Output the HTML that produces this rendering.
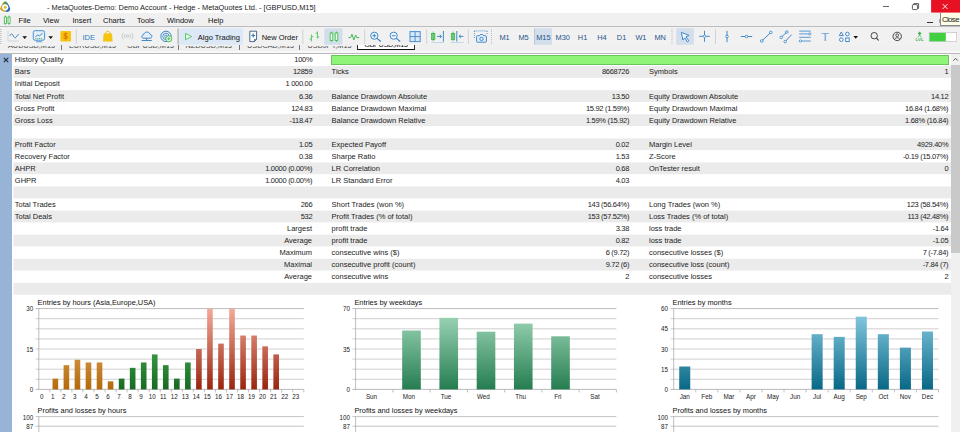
<!DOCTYPE html>
<html><head><meta charset="utf-8"><title>MetaTrader 5 - Strategy Tester Report</title>
<style>
html,body{margin:0;padding:0}
body{width:960px;height:432px;overflow:hidden;position:relative;background:#fff;font-family:"Liberation Sans",sans-serif;font-size:7.5px;color:#1c1c1c}
div,span{position:absolute;white-space:pre;line-height:12px}
svg{position:absolute;overflow:visible}
.row{left:12px;width:939px;height:12px}
.g{background:#ebebeb}
.l{height:12px}
.r{height:12px;text-align:right}
.n{letter-spacing:-0.3px;margin-right:-0.3px}
.mi{top:15.1px;height:12px;font-size:7.5px;color:#111}
.tf{top:31.8px;height:12px;color:#28558a;font-size:7.4px}
.tab{top:0;height:12px;color:#4a4a4a;font-size:7.3px}
.ct{font-size:7.4px;color:#111;height:10px;line-height:10px}
</style></head><body>

<div style="left:0;top:0;width:960px;height:13.3px;background:#fff"></div>
<div style="left:47px;top:1.8px;height:12px;color:#222;font-size:7.45px">- MetaQuotes-Demo: Demo Account - Hedge - MetaQuotes Ltd. - [GBPUSD,M15]</div>
<svg style="left:0;top:1px" width="11" height="12" viewBox="0 0 11 12">
<path d="M5.2 0.6 C7.2 0.8 9.6 5 10.2 8 C10.4 10 8.6 11 5.8 10.9 Z" fill="#2f6fb3"/>
<path d="M5.2 0.6 C3.4 1 0.8 5.4 0.2 7.6 C0 9.6 2 10.8 5.8 10.9 Z" fill="#c9a227"/>
<path d="M5.2 0.4 C6.6 0.6 7.6 2 8 3 L2.6 3 C3.2 1.6 4.2 0.6 5.2 0.4Z" fill="#5aa04a"/>
<circle cx="5.2" cy="6.3" r="3.1" fill="#fff"/>
<circle cx="5.2" cy="6.3" r="1.5" fill="#e3b93a"/>
</svg>
<svg style="left:931px;top:0" width="29" height="13"><rect x="0.1" y="0" width="29" height="12.6" fill="#e81123"/></svg>
<svg style="left:931px;top:0" width="29" height="13"><path d="M11.6 4 L16.6 9 M16.6 4 L11.6 9" stroke="#fff" stroke-width="0.9" fill="none"/></svg>
<svg style="left:905px;top:0" width="20" height="13"><rect x="7.4" y="4.6" width="5" height="5" rx="0.8" fill="none" stroke="#333" stroke-width="0.8"/><path d="M8.8 4.4 V3.6 H13.6 V8.4 H12.6" fill="none" stroke="#333" stroke-width="0.8"/></svg>
<div style="left:883px;top:6.1px;width:6.2px;height:0.6px;background:#666"></div>
<div style="left:0;top:13.3px;width:960px;height:40px;background:#f0f0f0"></div>
<div style="left:0;top:26px;width:960px;height:0.8px;background:#bdbdbd"></div>
<svg style="left:0;top:13px" width="14" height="14" viewBox="0 13 14 14">
<rect x="4.3" y="17" width="2.1" height="6.4" fill="#eefaee" stroke="#3fb44c" stroke-width="0.8"/>
<rect x="8" y="17" width="2.1" height="6.4" fill="#eefaee" stroke="#3fb44c" stroke-width="0.8"/>
<path d="M5.35 15.7 V17 M5.35 23.4 V24.9 M9.05 15.7 V17 M9.05 23.4 V24.9" stroke="#3fb44c" stroke-width="0.8"/>
</svg>
<div class="mi" style="left:18.6px">File</div>
<div class="mi" style="left:43px">View</div>
<div class="mi" style="left:72.5px">Insert</div>
<div class="mi" style="left:103px">Charts</div>
<div class="mi" style="left:137px">Tools</div>
<div class="mi" style="left:167px">Window</div>
<div class="mi" style="left:208px">Help</div>
<div style="left:927.2px;top:22px;width:5.4px;height:1px;background:#333"></div>
<div style="left:939px;top:18.5px;width:1.2px;height:4px;background:#aaa"></div>
<div style="left:940.3px;top:13.4px;width:22px;height:11.2px;background:#fdfde6;border-left:0.7px solid #8a8a8a;border-bottom:0.7px solid #8a8a8a"></div>
<div style="left:941.9px;top:14px;height:12px;font-size:7.9px;letter-spacing:-0.62px;color:#222">Close</div>
<div style="left:0;top:45.5px;width:960px;height:3.1px;overflow:hidden">
<div class="tab" style="left:8px;top:-5.9px">AUDUSD,M15</div>
<div class="tab" style="left:69px;top:-5.9px">EURUSD,M15</div>
<div class="tab" style="left:127px;top:-5.9px">GBPUSD,M15</div>
<div class="tab" style="left:185.5px;top:-5.9px">NZDUSD,M15</div>
<div class="tab" style="left:247px;top:-5.9px">USDCAD,M15</div>
<div class="tab" style="left:307.5px;top:-5.9px">USDJPY,M15</div>
</div>
<div style="left:61.2px;top:45px;width:0.7px;height:4.6px;background:#777"></div>
<div style="left:178.4px;top:45px;width:0.7px;height:4.6px;background:#777"></div>
<div style="left:239.4px;top:45px;width:0.7px;height:4.6px;background:#777"></div>
<div style="left:299.4px;top:45px;width:0.7px;height:4.6px;background:#777"></div>
<div style="left:356.8px;top:40px;width:58.2px;height:10.4px;background:#fff;border:0.7px solid #333;border-bottom:1.1px solid #111;box-sizing:border-box"></div>
<div style="left:358px;top:45.4px;width:56px;height:2.9px;overflow:hidden"><div class="tab" style="left:6.2px;top:-6.3px;color:#111;font-size:7.3px;letter-spacing:-0.35px">GBPUSD,M15</div></div>
<div style="left:0;top:51px;width:960px;height:1.8px;background:#f8f8f8"></div>
<div style="left:0;top:52.8px;width:960px;height:1px;background:#b9b9b9"></div>
<div style="left:0;top:26.8px;width:960px;height:18.6px;background:#f1f1f1"></div>
<svg style="left:0;top:0" width="960" height="54" viewBox="0 0 960 54" fill="none">
<path d="M0.9 29 V44" stroke="#a8a8a8" stroke-width="1" stroke-dasharray="1 1"/>
<path d="M76.3 29.4 V44" stroke="#c9c9c9" stroke-width="0.8"/>
<path d="M302.8 29.4 V44" stroke="#c9c9c9" stroke-width="0.8"/>
<path d="M364.7 29.4 V44" stroke="#c9c9c9" stroke-width="0.8"/>
<path d="M426.7 29.4 V44" stroke="#c9c9c9" stroke-width="0.8"/>
<path d="M468.4 29.4 V44" stroke="#c9c9c9" stroke-width="0.8"/>
<path d="M715.5 29.4 V44" stroke="#c9c9c9" stroke-width="0.8"/>
<path d="M178.1 28.5 V44.6" stroke="#8a8a8a" stroke-width="0.8"/>
<path d="M491.5 29 V44.5" stroke="#bcbcbc" stroke-width="1" stroke-dasharray="1 1"/>
<path d="M672 29 V44.5" stroke="#bcbcbc" stroke-width="1" stroke-dasharray="1 1"/>
<rect x="179.4" y="28.4" width="63.6" height="16.3" fill="#dce8f5"/>
<rect x="324.3" y="28.3" width="18.1" height="16.4" fill="#d2deec"/>
<rect x="534.3" y="28.3" width="17.7" height="16.4" fill="#d2deec"/>
<path d="M534.5 28.3 V44.7" stroke="#9fb6d0" stroke-width="0.6"/>
<rect x="676.2" y="28.3" width="17.6" height="16.4" fill="#d2deec"/>
<path d="M8 31 V41 H18.8" stroke="#cdd5de" stroke-width="1"/>
<path d="M9.8 35.8 C10.8 33.8 12 33.4 13 35.2 C14 37.4 15.2 38.8 16.4 36.8 C17.2 35.4 17.8 34.8 18.8 34.7" stroke="#2f7ec2" stroke-width="1"/>
<path d="M22.4 36.2 H27.0 L24.7 38.9 Z" fill="#111"/>
<rect x="33.3" y="30.7" width="11.3" height="9.5" rx="1.6" fill="#e6f0fa" stroke="#4a8fd2" stroke-width="1"/>
<path d="M36 41.6 H42" stroke="#7fb0e0" stroke-width="1.4"/>
<path d="M35.4 36.8 L37.6 35 L39.4 35.9 L42.6 33.2" stroke="#2f7ec2" stroke-width="0.9"/>
<path d="M35.4 38.5 H42.8" stroke="#3fb44c" stroke-width="0.9" stroke-dasharray="1 0.8"/>
<path d="M48.400000000000006 36.2 H53.0 L50.7 38.9 Z" fill="#111"/>
<rect x="60.4" y="31" width="10.6" height="10.6" rx="0.8" fill="#f6c30f"/>
<text x="65.7" y="39.3" font-size="8.4" font-weight="bold" text-anchor="middle" fill="#e07b00" font-family="Liberation Sans,sans-serif">$</text>
<path d="M65.7 32.4 V40.4" stroke="#e07b00" stroke-width="0.7"/>
<path d="M103.6 33.6 H112 L112.6 41.6 H103 Z" fill="#f6c30f"/>
<path d="M105.8 34 V33 C105.8 30.6 109.8 30.6 109.8 33 V34" stroke="#eab308" stroke-width="0.9"/>
<circle cx="127.5" cy="36.2" r="1.1" stroke="#bdbdbd" stroke-width="0.8"/>
<path d="M125.4 34 C124.2 35.4 124.2 37 125.4 38.4 M129.6 34 C130.8 35.4 130.8 37 129.6 38.4 M123.4 33 C121.6 35 121.6 37.6 123.4 39.4 M131.6 33 C133.4 35 133.4 37.6 131.6 39.4" stroke="#c4c4c4" stroke-width="0.9"/>
<path d="M143.8 38.2 C141 38.2 141 35 143.6 34.8 C144 31.4 149.4 31 150 34.4 C152.6 34.6 152.6 38.2 150 38.2 Z" fill="#e6f0fa" stroke="#2f7ec2" stroke-width="0.9"/>
<path d="M146.6 38.2 V40.4 M141.6 40.5 H151.8" stroke="#2f7ec2" stroke-width="0.9"/>
<circle cx="166" cy="36.4" r="5.2" fill="#e6f0fa" stroke="#2f7ec2" stroke-width="0.9"/><circle cx="166" cy="36.4" r="3.2" stroke="#2f7ec2" stroke-width="0.8"/><circle cx="166" cy="36.4" r="1.3" stroke="#2f7ec2" stroke-width="0.7"/>
<circle cx="168.8" cy="38.8" r="3" fill="#f4fcf4" stroke="#3fb44c" stroke-width="0.9"/><path d="M168.8 37.2 V40.4 M167.2 38.8 H170.4" stroke="#3fb44c" stroke-width="0.9"/>
<path d="M185.5 33.4 L191.6 36.55 L185.5 39.7 Z" fill="#effaf0" stroke="#4cc458" stroke-width="0.9" stroke-linejoin="round"/>
<path d="M249.8 31.2 H256.6 V39.4 L254.4 41.6 H249.8 Z" fill="#fff" stroke="#3b5a7a" stroke-width="0.9" stroke-linejoin="round"/>
<path d="M256.6 39.4 H254.4 V41.6" stroke="#3b5a7a" stroke-width="0.8"/>
<path d="M253.2 33.6 V37.4 M251.3 35.5 H255.1" stroke="#2f7ec2" stroke-width="1.1"/>
<path d="M311.4 34.6 V41.4 M309.6 39 H311.4 M311.4 36.6 H313.2 M317.4 31.4 V38.6 M315.6 33.2 H317.4 M317.4 37 H319.2" stroke="#4cc458" stroke-width="0.9"/>
<rect x="330.2" y="33" width="2.6" height="7.4" fill="#f0fbf0" stroke="#3cc24a" stroke-width="0.9"/><rect x="335.2" y="33" width="2.6" height="7.4" fill="#f0fbf0" stroke="#3cc24a" stroke-width="0.9"/>
<path d="M331.5 31.6 V33 M331.5 40.4 V41.8 M336.5 31.6 V33 M336.5 40.4 V41.8" stroke="#3cc24a" stroke-width="0.9"/>
<path d="M348.4 37.6 H350.6 L352 34.2 L353.8 40 L355.6 35 L356.8 37.6 H359.2" stroke="#3fb44c" stroke-width="0.95" stroke-linejoin="round"/>
<circle cx="374.3" cy="35.7" r="3.6" fill="#eef5fc" stroke="#2f7ec2" stroke-width="0.9"/><path d="M377.0 38.4 L380.8 41.5" stroke="#2f7ec2" stroke-width="1.1"/>
<path d="M372.5 35.7 H376.1 M374.3 33.9 V37.5" stroke="#2f7ec2" stroke-width="0.9"/>
<circle cx="393.7" cy="35.7" r="3.6" fill="#eef5fc" stroke="#2f7ec2" stroke-width="0.9"/><path d="M396.4 38.4 L400.2 41.5" stroke="#2f7ec2" stroke-width="1.1"/>
<path d="M391.9 35.7 H395.5" stroke="#2f7ec2" stroke-width="0.9"/>
<rect x="410" y="31.6" width="10.2" height="10" fill="#dbe9f7" stroke="#4a8fd2" stroke-width="1"/><path d="M415.1 31.6 V41.6 M410 36.6 H420.2" stroke="#4a8fd2" stroke-width="1"/>
<rect x="431.5" y="33.4" width="3.4" height="6" fill="#7fd88a" stroke="#3fb44c" stroke-width="0.8"/><path d="M433.2 31.6 V41.2" stroke="#3fb44c" stroke-width="0.8"/>
<path d="M437 36.4 H441.4 M439.8 34.8 L441.6 36.4 L439.8 38 M443.4 31 V41.6" stroke="#2f7ec2" stroke-width="0.9"/><path d="M431 42.5 H444" stroke="#b9cfe6" stroke-width="0.8"/>
<rect x="451.3" y="33.4" width="3.4" height="6" fill="#7fd88a" stroke="#3fb44c" stroke-width="0.8"/><path d="M453 31.6 V41.2" stroke="#3fb44c" stroke-width="0.8"/>
<path d="M456.8 31 V41.6 M459 36.4 H463.4 M460.8 34.8 L459 36.4 L460.8 38" stroke="#2f7ec2" stroke-width="0.9"/><path d="M450.6 42.5 H463.6" stroke="#b9cfe6" stroke-width="0.8"/>
<path d="M474.4 30.9 H487 M474.4 31 V38.6 M487 31 V34.4" stroke="#2f7ec2" stroke-width="0.8" stroke-dasharray="1 1"/>
<path d="M477.4 35.7 H479.6 L480.4 34.5 H482.8 L483.6 35.7 H485.6 Q486.4 35.7 486.4 36.5 V41.4 Q486.4 42.2 485.6 42.2 H477.4 Q476.6 42.2 476.6 41.4 V36.5 Q476.6 35.7 477.4 35.7 Z" fill="#e6f0fa" stroke="#2f7ec2" stroke-width="0.9"/><circle cx="481.5" cy="38.9" r="1.7" stroke="#2f7ec2" stroke-width="0.9"/>
<path d="M681.4 32.4 L689 35.4 L686 36.8 L688.8 40.8 L687.4 41.8 L684.8 37.8 L682.8 40 Z" fill="#f4f9ff" stroke="#2f7ec2" stroke-width="0.9" stroke-linejoin="round"/>
<path d="M704.5 30.8 V41.8 M699.2 36.3 H709.8" stroke="#2f7ec2" stroke-width="0.9"/><circle cx="704.5" cy="36.3" r="1.2" fill="#fff" stroke="#2f7ec2" stroke-width="0.7"/>
<path d="M727 30.8 V42.2" stroke="#2f7ec2" stroke-width="0.9"/><circle cx="727" cy="36.5" r="1.3" fill="#fff" stroke="#2f7ec2" stroke-width="0.8"/>
<path d="M740.8 36.5 H752.2" stroke="#2f7ec2" stroke-width="0.9"/><circle cx="746.5" cy="36.5" r="1.3" fill="#fff" stroke="#2f7ec2" stroke-width="0.8"/>
<path d="M761.8 41 L770.8 32.4" stroke="#2f7ec2" stroke-width="0.9"/><circle cx="761.8" cy="41" r="1.3" fill="#fff" stroke="#2f7ec2" stroke-width="0.8"/><circle cx="770.8" cy="32.4" r="1.3" fill="#fff" stroke="#2f7ec2" stroke-width="0.8"/>
<path d="M781.2 37.4 L786.8 32 M785.2 41.6 L791.6 34.6" stroke="#2f7ec2" stroke-width="0.9"/><circle cx="781.2" cy="37.4" r="1.25" fill="#fff" stroke="#2f7ec2" stroke-width="0.8"/><circle cx="786.8" cy="32" r="1.25" fill="#fff" stroke="#2f7ec2" stroke-width="0.8"/><circle cx="785.2" cy="41.6" r="1.25" fill="#fff" stroke="#2f7ec2" stroke-width="0.8"/>
<path d="M799.2 31.1 H810.8 M799.2 33.9 H810.8 M799.2 37.3 H810.8 M799.2 41 H810.8" stroke="#4a8fd2" stroke-width="0.9"/><circle cx="809.8" cy="33.9" r="1.15" fill="#fff" stroke="#2f7ec2" stroke-width="0.7"/><circle cx="800.4" cy="41" r="1.15" fill="#fff" stroke="#2f7ec2" stroke-width="0.7"/>
<path d="M841.3 32 L843.3 35.6 H839.3 Z" fill="#fff" stroke="#2f7ec2" stroke-width="0.9" stroke-linejoin="round"/><circle cx="847.4" cy="34" r="1.8" fill="#fff" stroke="#2f7ec2" stroke-width="0.9"/><circle cx="841.3" cy="39.7" r="1.8" fill="#fff" stroke="#2f7ec2" stroke-width="0.9"/><rect x="845.7" y="38" width="3.5" height="3.5" fill="#fff" stroke="#2f7ec2" stroke-width="0.9"/>
<path d="M853.4000000000001 36.1 H858.0 L855.7 38.8 Z" fill="#111"/>
<circle cx="874.2" cy="35.7" r="3.2" stroke="#333" stroke-width="0.9"/><path d="M876.5 38.1 L878.7 40.5" stroke="#333" stroke-width="1.1"/>
<circle cx="897.2" cy="36.4" r="4.2" stroke="#333" stroke-width="0.9"/><circle cx="897.2" cy="35.2" r="1.4" stroke="#333" stroke-width="0.8"/><path d="M894.6 39.4 C895 37.2 899.4 37.2 899.8 39.4" stroke="#333" stroke-width="0.8"/>
<path d="M919.6 31.6 L921.4 33.5 L919.6 35.4 L917.8 33.5 Z" fill="#3fb44c"/><path d="M917.6 37 L919.6 35.6 L921.6 37" stroke="#3fb44c" stroke-width="0.8"/>
<text x="919.6" y="41.3" font-size="4.4" font-weight="bold" text-anchor="middle" fill="#3fb44c" font-family="Liberation Sans,sans-serif">LVL</text>
<rect x="929.2" y="32.6" width="27.5" height="9" fill="#fff" stroke="#b9b9b9" stroke-width="0.6"/><rect x="929.5" y="32.9" width="16.3" height="8.4" fill="#3fcf3f"/>
</svg>
<div style="left:82.4px;top:31.6px;height:12px;font-size:7.6px;color:#2f7ec2">IDE</div>
<div style="left:197.8px;top:31.8px;height:12px;color:#111">Algo Trading</div>
<div style="left:261.7px;top:31.8px;height:12px;color:#111">New Order</div>
<div class="tf" style="left:499.4px">M1</div>
<div class="tf" style="left:518.4px">M5</div>
<div class="tf" style="left:536.2px">M15</div>
<div class="tf" style="left:555.6px">M30</div>
<div class="tf" style="left:577.8px">H1</div>
<div class="tf" style="left:597.2px">H4</div>
<div class="tf" style="left:616.8px">D1</div>
<div class="tf" style="left:635.4px">W1</div>
<div class="tf" style="left:654.4px">MN</div>
<div style="left:820.9px;top:29.6px;height:14px;line-height:14px;font-size:11.7px;color:#74a8da;transform:scaleX(1.16);transform-origin:0 0">T</div>
<div style="left:0;top:53.8px;width:11.5px;height:379px;background:#97b3d5"></div>
<svg style="left:2.5px;top:57px" width="6" height="6" viewBox="0 0 6 6"><path d="M0.8 0.8 L5.2 5.2 M5.2 0.8 L0.8 5.2" stroke="#1b2a3a" stroke-width="1.1"/></svg>
<svg style="left:0;top:0" width="960" height="432" viewBox="0 0 960 432">
<rect x="13.4" y="66.06" width="937.8" height="11.80" fill="#ebebeb"/>
<rect x="13.4" y="90.16" width="937.8" height="11.80" fill="#ebebeb"/>
<rect x="13.4" y="114.25" width="937.8" height="11.80" fill="#ebebeb"/>
<rect x="13.4" y="138.34" width="937.8" height="11.80" fill="#ebebeb"/>
<rect x="13.4" y="162.43" width="937.8" height="11.80" fill="#ebebeb"/>
<rect x="13.4" y="186.52" width="937.8" height="11.80" fill="#ebebeb"/>
<rect x="13.4" y="210.61" width="937.8" height="11.80" fill="#ebebeb"/>
<rect x="13.4" y="234.70" width="937.8" height="11.80" fill="#ebebeb"/>
<rect x="13.4" y="258.78" width="937.8" height="11.80" fill="#ebebeb"/>
<rect x="13.4" y="282.88" width="937.8" height="11.80" fill="#ebebeb"/>
</svg>
<div class="row" style="top:54.40px">
<span class="l" style="left:2.8px;top:0">History Quality</span>
<span class="r n" style="right:639.0px;top:0">100%</span>
</div>
<div class="row" style="top:66.44px">
<span class="l" style="left:2.8px;top:0">Bars</span>
<span class="r n" style="right:639.0px;top:0">12859</span>
<span class="l" style="left:319.6px;top:0">Ticks</span>
<span class="r n" style="right:322.2px;top:0">8668726</span>
<span class="l" style="left:637.0px;top:0">Symbols</span>
<span class="r n" style="right:3.0px;top:0">1</span>
</div>
<div class="row" style="top:78.49px">
<span class="l" style="left:2.8px;top:0">Initial Deposit</span>
<span class="r n" style="right:639.0px;top:0">1 000.00</span>
</div>
<div class="row" style="top:90.53px">
<span class="l" style="left:2.8px;top:0">Total Net Profit</span>
<span class="r n" style="right:639.0px;top:0">6.36</span>
<span class="l" style="left:319.6px;top:0">Balance Drawdown Absolute</span>
<span class="r n" style="right:322.2px;top:0">13.50</span>
<span class="l" style="left:637.0px;top:0">Equity Drawdown Absolute</span>
<span class="r n" style="right:3.0px;top:0">14.12</span>
</div>
<div class="row" style="top:102.58px">
<span class="l" style="left:2.8px;top:0">Gross Profit</span>
<span class="r n" style="right:639.0px;top:0">124.83</span>
<span class="l" style="left:319.6px;top:0">Balance Drawdown Maximal</span>
<span class="r n" style="right:322.2px;top:0">15.92 (1.59%)</span>
<span class="l" style="left:637.0px;top:0">Equity Drawdown Maximal</span>
<span class="r n" style="right:3.0px;top:0">16.84 (1.68%)</span>
</div>
<div class="row" style="top:114.62px">
<span class="l" style="left:2.8px;top:0">Gross Loss</span>
<span class="r n" style="right:639.0px;top:0">-118.47</span>
<span class="l" style="left:319.6px;top:0">Balance Drawdown Relative</span>
<span class="r n" style="right:322.2px;top:0">1.59% (15.92)</span>
<span class="l" style="left:637.0px;top:0">Equity Drawdown Relative</span>
<span class="r n" style="right:3.0px;top:0">1.68% (16.84)</span>
</div>
<div class="row" style="top:126.67px">
</div>
<div class="row" style="top:138.72px">
<span class="l" style="left:2.8px;top:0">Profit Factor</span>
<span class="r n" style="right:639.0px;top:0">1.05</span>
<span class="l" style="left:319.6px;top:0">Expected Payoff</span>
<span class="r n" style="right:322.2px;top:0">0.02</span>
<span class="l" style="left:637.0px;top:0">Margin Level</span>
<span class="r n" style="right:3.0px;top:0">4929.40%</span>
</div>
<div class="row" style="top:150.76px">
<span class="l" style="left:2.8px;top:0">Recovery Factor</span>
<span class="r n" style="right:639.0px;top:0">0.38</span>
<span class="l" style="left:319.6px;top:0">Sharpe Ratio</span>
<span class="r n" style="right:322.2px;top:0">1.53</span>
<span class="l" style="left:637.0px;top:0">Z-Score</span>
<span class="r n" style="right:3.0px;top:0">-0.19 (15.07%)</span>
</div>
<div class="row" style="top:162.81px">
<span class="l" style="left:2.8px;top:0">AHPR</span>
<span class="r n" style="right:639.0px;top:0">1.0000 (0.00%)</span>
<span class="l" style="left:319.6px;top:0">LR Correlation</span>
<span class="r n" style="right:322.2px;top:0">0.68</span>
<span class="l" style="left:637.0px;top:0">OnTester result</span>
<span class="r n" style="right:3.0px;top:0">0</span>
</div>
<div class="row" style="top:174.85px">
<span class="l" style="left:2.8px;top:0">GHPR</span>
<span class="r n" style="right:639.0px;top:0">1.0000 (0.00%)</span>
<span class="l" style="left:319.6px;top:0">LR Standard Error</span>
<span class="r n" style="right:322.2px;top:0">4.03</span>
</div>
<div class="row" style="top:186.90px">
</div>
<div class="row" style="top:198.94px">
<span class="l" style="left:2.8px;top:0">Total Trades</span>
<span class="r n" style="right:639.0px;top:0">266</span>
<span class="l" style="left:319.6px;top:0">Short Trades (won %)</span>
<span class="r n" style="right:322.2px;top:0">143 (56.64%)</span>
<span class="l" style="left:637.0px;top:0">Long Trades (won %)</span>
<span class="r n" style="right:3.0px;top:0">123 (58.54%)</span>
</div>
<div class="row" style="top:210.99px">
<span class="l" style="left:2.8px;top:0">Total Deals</span>
<span class="r n" style="right:639.0px;top:0">532</span>
<span class="l" style="left:319.6px;top:0">Profit Trades (% of total)</span>
<span class="r n" style="right:322.2px;top:0">153 (57.52%)</span>
<span class="l" style="left:637.0px;top:0">Loss Trades (% of total)</span>
<span class="r n" style="right:3.0px;top:0">113 (42.48%)</span>
</div>
<div class="row" style="top:223.03px">
<span class="r" style="right:639.0px;top:0">Largest</span>
<span class="l" style="left:319.6px;top:0">profit trade</span>
<span class="r n" style="right:322.2px;top:0">3.38</span>
<span class="l" style="left:637.0px;top:0">loss trade</span>
<span class="r n" style="right:3.0px;top:0">-1.64</span>
</div>
<div class="row" style="top:235.08px">
<span class="r" style="right:639.0px;top:0">Average</span>
<span class="l" style="left:319.6px;top:0">profit trade</span>
<span class="r n" style="right:322.2px;top:0">0.82</span>
<span class="l" style="left:637.0px;top:0">loss trade</span>
<span class="r n" style="right:3.0px;top:0">-1.05</span>
</div>
<div class="row" style="top:247.12px">
<span class="r" style="right:639.0px;top:0">Maximum</span>
<span class="l" style="left:319.6px;top:0">consecutive wins ($)</span>
<span class="r n" style="right:322.2px;top:0">6 (9.72)</span>
<span class="l" style="left:637.0px;top:0">consecutive losses ($)</span>
<span class="r n" style="right:3.0px;top:0">7 (-7.84)</span>
</div>
<div class="row" style="top:259.16px">
<span class="r" style="right:639.0px;top:0">Maximal</span>
<span class="l" style="left:319.6px;top:0">consecutive profit (count)</span>
<span class="r n" style="right:322.2px;top:0">9.72 (6)</span>
<span class="l" style="left:637.0px;top:0">consecutive loss (count)</span>
<span class="r n" style="right:3.0px;top:0">-7.84 (7)</span>
</div>
<div class="row" style="top:271.21px">
<span class="r" style="right:639.0px;top:0">Average</span>
<span class="l" style="left:319.6px;top:0">consecutive wins</span>
<span class="r n" style="right:322.2px;top:0">2</span>
<span class="l" style="left:637.0px;top:0">consecutive losses</span>
<span class="r n" style="right:3.0px;top:0">2</span>
</div>
<div class="row" style="top:283.25px">
</div>
<div style="left:331px;top:55.2px;width:618.4px;height:9.4px;background:#8ef578;border:0.7px solid #6cc45e;box-sizing:border-box"></div>
<div style="left:951px;top:53.8px;width:9px;height:379px;background:#f0f0f0"></div>
<div style="left:951px;top:65.2px;width:9px;height:188px;background:#c9c9c9"></div>
<svg style="left:951px;top:54px" width="9" height="11" viewBox="0 0 9 11"><path d="M2.4 6.6 L4.6 4.4 L6.8 6.6" fill="none" stroke="#444" stroke-width="0.9"/></svg>
<svg style="left:0;top:0" width="960" height="432" viewBox="0 0 960 432" font-family="Liberation Sans,sans-serif">
<defs><linearGradient id="gO" gradientUnits="userSpaceOnUse" x1="0" y1="308.6" x2="0" y2="389.4"><stop offset="0" stop-color="#f3c98a"/><stop offset="1" stop-color="#b5690a"/></linearGradient><linearGradient id="gG" gradientUnits="userSpaceOnUse" x1="0" y1="308.6" x2="0" y2="389.4"><stop offset="0" stop-color="#5dce65"/><stop offset="1" stop-color="#176a22"/></linearGradient><linearGradient id="gR" gradientUnits="userSpaceOnUse" x1="0" y1="308.6" x2="0" y2="389.4"><stop offset="0" stop-color="#f4aa98"/><stop offset="1" stop-color="#99250f"/></linearGradient><linearGradient id="gW" gradientUnits="userSpaceOnUse" x1="0" y1="308.6" x2="0" y2="389.4"><stop offset="0" stop-color="#a6dcbf"/><stop offset="1" stop-color="#257d50"/></linearGradient><linearGradient id="gM" gradientUnits="userSpaceOnUse" x1="0" y1="308.6" x2="0" y2="389.4"><stop offset="0" stop-color="#8ed0e6"/><stop offset="1" stop-color="#086886"/></linearGradient></defs>
<text x="37.599999999999994" y="305.2" font-size="7.4" fill="#111">Entries by hours (Asia,Europe,USA)</text>
<path d="M35.599999999999994 308.60 H303.8" stroke="#a8a8a8" stroke-width="0.8"/>
<path d="M35.599999999999994 318.70 H303.8" stroke="#c4c4c4" stroke-width="0.8"/>
<path d="M35.599999999999994 328.80 H303.8" stroke="#c4c4c4" stroke-width="0.8"/>
<path d="M35.599999999999994 338.90 H303.8" stroke="#c4c4c4" stroke-width="0.8"/>
<path d="M35.599999999999994 349.00 H303.8" stroke="#c4c4c4" stroke-width="0.8"/>
<path d="M35.599999999999994 359.10 H303.8" stroke="#c4c4c4" stroke-width="0.8"/>
<path d="M35.599999999999994 369.20 H303.8" stroke="#c4c4c4" stroke-width="0.8"/>
<path d="M35.599999999999994 379.30 H303.8" stroke="#c4c4c4" stroke-width="0.8"/>
<path d="M35.599999999999994 389.40 H303.8" stroke="#a8a8a8" stroke-width="0.8"/>
<path d="M38.8 308.6 V389.79999999999995" stroke="#a8a8a8" stroke-width="0.75"/>
<text x="33.199999999999996" y="311.20" font-size="6.3" text-anchor="end" fill="#222">30</text>
<text x="33.199999999999996" y="351.60" font-size="6.3" text-anchor="end" fill="#222">15</text>
<text x="33.199999999999996" y="392.00" font-size="6.3" text-anchor="end" fill="#222">0</text>
<path d="M49.84 389.4 V392.4" stroke="#b0b0b0" stroke-width="0.8"/>
<path d="M60.88 389.4 V392.4" stroke="#b0b0b0" stroke-width="0.8"/>
<path d="M71.92 389.4 V392.4" stroke="#b0b0b0" stroke-width="0.8"/>
<path d="M82.97 389.4 V392.4" stroke="#b0b0b0" stroke-width="0.8"/>
<path d="M94.01 389.4 V392.4" stroke="#b0b0b0" stroke-width="0.8"/>
<path d="M105.05 389.4 V392.4" stroke="#b0b0b0" stroke-width="0.8"/>
<path d="M116.09 389.4 V392.4" stroke="#b0b0b0" stroke-width="0.8"/>
<path d="M127.13 389.4 V392.4" stroke="#b0b0b0" stroke-width="0.8"/>
<path d="M138.18 389.4 V392.4" stroke="#b0b0b0" stroke-width="0.8"/>
<path d="M149.22 389.4 V392.4" stroke="#b0b0b0" stroke-width="0.8"/>
<path d="M160.26 389.4 V392.4" stroke="#b0b0b0" stroke-width="0.8"/>
<path d="M171.30 389.4 V392.4" stroke="#b0b0b0" stroke-width="0.8"/>
<path d="M182.34 389.4 V392.4" stroke="#b0b0b0" stroke-width="0.8"/>
<path d="M193.38 389.4 V392.4" stroke="#b0b0b0" stroke-width="0.8"/>
<path d="M204.43 389.4 V392.4" stroke="#b0b0b0" stroke-width="0.8"/>
<path d="M215.47 389.4 V392.4" stroke="#b0b0b0" stroke-width="0.8"/>
<path d="M226.51 389.4 V392.4" stroke="#b0b0b0" stroke-width="0.8"/>
<path d="M237.55 389.4 V392.4" stroke="#b0b0b0" stroke-width="0.8"/>
<path d="M248.59 389.4 V392.4" stroke="#b0b0b0" stroke-width="0.8"/>
<path d="M259.63 389.4 V392.4" stroke="#b0b0b0" stroke-width="0.8"/>
<path d="M270.68 389.4 V392.4" stroke="#b0b0b0" stroke-width="0.8"/>
<path d="M281.72 389.4 V392.4" stroke="#b0b0b0" stroke-width="0.8"/>
<path d="M292.76 389.4 V392.4" stroke="#b0b0b0" stroke-width="0.8"/>
<path d="M303.80 389.4 V392.4" stroke="#b0b0b0" stroke-width="0.8"/>
<text x="41.72" y="399.1" font-size="6.3" text-anchor="middle" fill="#222">0</text>
<rect x="52.55" y="378.63" width="5.63" height="10.77" fill="url(#gO)"/>
<text x="52.76" y="399.1" font-size="6.3" text-anchor="middle" fill="#222">1</text>
<rect x="63.59" y="365.16" width="5.63" height="24.24" fill="url(#gO)"/>
<text x="63.80" y="399.1" font-size="6.3" text-anchor="middle" fill="#222">2</text>
<rect x="74.63" y="359.77" width="5.63" height="29.63" fill="url(#gO)"/>
<text x="74.85" y="399.1" font-size="6.3" text-anchor="middle" fill="#222">3</text>
<rect x="85.67" y="362.47" width="5.63" height="26.93" fill="url(#gO)"/>
<text x="85.89" y="399.1" font-size="6.3" text-anchor="middle" fill="#222">4</text>
<rect x="96.71" y="362.47" width="5.63" height="26.93" fill="url(#gO)"/>
<text x="96.93" y="399.1" font-size="6.3" text-anchor="middle" fill="#222">5</text>
<rect x="107.76" y="381.32" width="5.63" height="8.08" fill="url(#gO)"/>
<text x="107.97" y="399.1" font-size="6.3" text-anchor="middle" fill="#222">6</text>
<rect x="118.80" y="378.63" width="5.63" height="10.77" fill="url(#gG)"/>
<text x="119.01" y="399.1" font-size="6.3" text-anchor="middle" fill="#222">7</text>
<rect x="129.84" y="367.85" width="5.63" height="21.55" fill="url(#gG)"/>
<text x="130.05" y="399.1" font-size="6.3" text-anchor="middle" fill="#222">8</text>
<rect x="140.88" y="362.47" width="5.63" height="26.93" fill="url(#gG)"/>
<text x="141.10" y="399.1" font-size="6.3" text-anchor="middle" fill="#222">9</text>
<rect x="151.92" y="354.39" width="5.63" height="35.01" fill="url(#gG)"/>
<text x="152.14" y="399.1" font-size="6.3" text-anchor="middle" fill="#222">10</text>
<rect x="162.96" y="365.16" width="5.63" height="24.24" fill="url(#gG)"/>
<text x="163.18" y="399.1" font-size="6.3" text-anchor="middle" fill="#222">11</text>
<rect x="174.01" y="378.63" width="5.63" height="10.77" fill="url(#gG)"/>
<text x="174.22" y="399.1" font-size="6.3" text-anchor="middle" fill="#222">12</text>
<rect x="185.05" y="362.47" width="5.63" height="26.93" fill="url(#gG)"/>
<text x="185.26" y="399.1" font-size="6.3" text-anchor="middle" fill="#222">13</text>
<rect x="196.09" y="349.00" width="5.63" height="40.40" fill="url(#gR)"/>
<text x="196.30" y="399.1" font-size="6.3" text-anchor="middle" fill="#222">14</text>
<rect x="207.13" y="308.60" width="5.63" height="80.80" fill="url(#gR)"/>
<text x="207.35" y="399.1" font-size="6.3" text-anchor="middle" fill="#222">15</text>
<rect x="218.17" y="343.61" width="5.63" height="45.79" fill="url(#gR)"/>
<text x="218.39" y="399.1" font-size="6.3" text-anchor="middle" fill="#222">16</text>
<rect x="229.21" y="308.60" width="5.63" height="80.80" fill="url(#gR)"/>
<text x="229.43" y="399.1" font-size="6.3" text-anchor="middle" fill="#222">17</text>
<rect x="240.26" y="335.53" width="5.63" height="53.87" fill="url(#gR)"/>
<text x="240.47" y="399.1" font-size="6.3" text-anchor="middle" fill="#222">18</text>
<rect x="251.30" y="335.53" width="5.63" height="53.87" fill="url(#gR)"/>
<text x="251.51" y="399.1" font-size="6.3" text-anchor="middle" fill="#222">19</text>
<rect x="262.34" y="346.31" width="5.63" height="43.09" fill="url(#gR)"/>
<text x="262.55" y="399.1" font-size="6.3" text-anchor="middle" fill="#222">20</text>
<rect x="273.38" y="354.39" width="5.63" height="35.01" fill="url(#gR)"/>
<text x="273.60" y="399.1" font-size="6.3" text-anchor="middle" fill="#222">21</text>
<text x="284.64" y="399.1" font-size="6.3" text-anchor="middle" fill="#222">22</text>
<text x="295.68" y="399.1" font-size="6.3" text-anchor="middle" fill="#222">23</text>
<text x="37.599999999999994" y="413" font-size="7.4" fill="#111">Profits and losses by hours</text>
<path d="M35.599999999999994 416.6 H303.8" stroke="#b4b4b4" stroke-width="0.8"/>
<text x="33.199999999999996" y="419.60" font-size="6.3" text-anchor="end" fill="#222">100</text>
<path d="M35.599999999999994 426.2 H303.8" stroke="#b4b4b4" stroke-width="0.8"/>
<text x="33.199999999999996" y="429.20" font-size="6.3" text-anchor="end" fill="#222">87</text>
<path d="M38.8 416.6 V432" stroke="#a8a8a8" stroke-width="0.75"/>
<text x="354.40000000000003" y="305.2" font-size="7.4" fill="#111">Entries by weekdays</text>
<path d="M352.40000000000003 308.60 H616.4" stroke="#a8a8a8" stroke-width="0.8"/>
<path d="M352.40000000000003 318.70 H616.4" stroke="#c4c4c4" stroke-width="0.8"/>
<path d="M352.40000000000003 328.80 H616.4" stroke="#c4c4c4" stroke-width="0.8"/>
<path d="M352.40000000000003 338.90 H616.4" stroke="#c4c4c4" stroke-width="0.8"/>
<path d="M352.40000000000003 349.00 H616.4" stroke="#c4c4c4" stroke-width="0.8"/>
<path d="M352.40000000000003 359.10 H616.4" stroke="#c4c4c4" stroke-width="0.8"/>
<path d="M352.40000000000003 369.20 H616.4" stroke="#c4c4c4" stroke-width="0.8"/>
<path d="M352.40000000000003 379.30 H616.4" stroke="#c4c4c4" stroke-width="0.8"/>
<path d="M352.40000000000003 389.40 H616.4" stroke="#a8a8a8" stroke-width="0.8"/>
<path d="M355.6 308.6 V389.79999999999995" stroke="#a8a8a8" stroke-width="0.75"/>
<text x="350.0" y="311.20" font-size="6.3" text-anchor="end" fill="#222">70</text>
<text x="350.0" y="351.60" font-size="6.3" text-anchor="end" fill="#222">35</text>
<text x="350.0" y="392.00" font-size="6.3" text-anchor="end" fill="#222">0</text>
<path d="M392.86 389.4 V392.4" stroke="#b0b0b0" stroke-width="0.8"/>
<path d="M430.11 389.4 V392.4" stroke="#b0b0b0" stroke-width="0.8"/>
<path d="M467.37 389.4 V392.4" stroke="#b0b0b0" stroke-width="0.8"/>
<path d="M504.63 389.4 V392.4" stroke="#b0b0b0" stroke-width="0.8"/>
<path d="M541.89 389.4 V392.4" stroke="#b0b0b0" stroke-width="0.8"/>
<path d="M579.14 389.4 V392.4" stroke="#b0b0b0" stroke-width="0.8"/>
<path d="M616.40 389.4 V392.4" stroke="#b0b0b0" stroke-width="0.8"/>
<text x="371.53" y="399.1" font-size="6.3" text-anchor="middle" fill="#222">Sun</text>
<rect x="402.17" y="330.53" width="18.63" height="58.87" fill="url(#gW)"/>
<text x="408.79" y="399.1" font-size="6.3" text-anchor="middle" fill="#222">Mon</text>
<rect x="439.43" y="317.83" width="18.63" height="71.57" fill="url(#gW)"/>
<text x="446.04" y="399.1" font-size="6.3" text-anchor="middle" fill="#222">Tue</text>
<rect x="476.69" y="331.69" width="18.63" height="57.71" fill="url(#gW)"/>
<text x="483.30" y="399.1" font-size="6.3" text-anchor="middle" fill="#222">Wed</text>
<rect x="513.94" y="323.61" width="18.63" height="65.79" fill="url(#gW)"/>
<text x="520.56" y="399.1" font-size="6.3" text-anchor="middle" fill="#222">Thu</text>
<rect x="551.20" y="336.30" width="18.63" height="53.10" fill="url(#gW)"/>
<text x="557.81" y="399.1" font-size="6.3" text-anchor="middle" fill="#222">Fri</text>
<text x="595.07" y="399.1" font-size="6.3" text-anchor="middle" fill="#222">Sat</text>
<text x="354.40000000000003" y="413" font-size="7.4" fill="#111">Profits and losses by weekdays</text>
<path d="M352.40000000000003 416.6 H616.4" stroke="#b4b4b4" stroke-width="0.8"/>
<text x="350.0" y="419.60" font-size="6.3" text-anchor="end" fill="#222">100</text>
<path d="M352.40000000000003 426.2 H616.4" stroke="#b4b4b4" stroke-width="0.8"/>
<text x="350.0" y="429.20" font-size="6.3" text-anchor="end" fill="#222">87</text>
<path d="M355.6 416.6 V432" stroke="#a8a8a8" stroke-width="0.75"/>
<text x="672.5" y="305.2" font-size="7.4" fill="#111">Entries by months</text>
<path d="M670.5 308.60 H938.5" stroke="#a8a8a8" stroke-width="0.8"/>
<path d="M670.5 318.70 H938.5" stroke="#c4c4c4" stroke-width="0.8"/>
<path d="M670.5 328.80 H938.5" stroke="#c4c4c4" stroke-width="0.8"/>
<path d="M670.5 338.90 H938.5" stroke="#c4c4c4" stroke-width="0.8"/>
<path d="M670.5 349.00 H938.5" stroke="#c4c4c4" stroke-width="0.8"/>
<path d="M670.5 359.10 H938.5" stroke="#c4c4c4" stroke-width="0.8"/>
<path d="M670.5 369.20 H938.5" stroke="#c4c4c4" stroke-width="0.8"/>
<path d="M670.5 379.30 H938.5" stroke="#c4c4c4" stroke-width="0.8"/>
<path d="M670.5 389.40 H938.5" stroke="#a8a8a8" stroke-width="0.8"/>
<path d="M673.7 308.6 V389.79999999999995" stroke="#a8a8a8" stroke-width="0.75"/>
<text x="668.1" y="311.20" font-size="6.3" text-anchor="end" fill="#222">60</text>
<text x="668.1" y="331.40" font-size="6.3" text-anchor="end" fill="#222">45</text>
<text x="668.1" y="351.60" font-size="6.3" text-anchor="end" fill="#222">30</text>
<text x="668.1" y="371.80" font-size="6.3" text-anchor="end" fill="#222">15</text>
<text x="668.1" y="392.00" font-size="6.3" text-anchor="end" fill="#222">0</text>
<path d="M695.77 389.4 V392.4" stroke="#b0b0b0" stroke-width="0.8"/>
<path d="M717.83 389.4 V392.4" stroke="#b0b0b0" stroke-width="0.8"/>
<path d="M739.90 389.4 V392.4" stroke="#b0b0b0" stroke-width="0.8"/>
<path d="M761.97 389.4 V392.4" stroke="#b0b0b0" stroke-width="0.8"/>
<path d="M784.03 389.4 V392.4" stroke="#b0b0b0" stroke-width="0.8"/>
<path d="M806.10 389.4 V392.4" stroke="#b0b0b0" stroke-width="0.8"/>
<path d="M828.17 389.4 V392.4" stroke="#b0b0b0" stroke-width="0.8"/>
<path d="M850.23 389.4 V392.4" stroke="#b0b0b0" stroke-width="0.8"/>
<path d="M872.30 389.4 V392.4" stroke="#b0b0b0" stroke-width="0.8"/>
<path d="M894.37 389.4 V392.4" stroke="#b0b0b0" stroke-width="0.8"/>
<path d="M916.43 389.4 V392.4" stroke="#b0b0b0" stroke-width="0.8"/>
<path d="M938.50 389.4 V392.4" stroke="#b0b0b0" stroke-width="0.8"/>
<rect x="679.22" y="366.51" width="11.03" height="22.89" fill="url(#gM)"/>
<text x="684.73" y="399.1" font-size="6.3" text-anchor="middle" fill="#222">Jan</text>
<text x="706.80" y="399.1" font-size="6.3" text-anchor="middle" fill="#222">Feb</text>
<text x="728.87" y="399.1" font-size="6.3" text-anchor="middle" fill="#222">Mar</text>
<text x="750.93" y="399.1" font-size="6.3" text-anchor="middle" fill="#222">Apr</text>
<text x="773.00" y="399.1" font-size="6.3" text-anchor="middle" fill="#222">May</text>
<text x="795.07" y="399.1" font-size="6.3" text-anchor="middle" fill="#222">Jun</text>
<rect x="811.62" y="334.19" width="11.03" height="55.21" fill="url(#gM)"/>
<text x="817.13" y="399.1" font-size="6.3" text-anchor="middle" fill="#222">Jul</text>
<rect x="833.68" y="336.88" width="11.03" height="52.52" fill="url(#gM)"/>
<text x="839.20" y="399.1" font-size="6.3" text-anchor="middle" fill="#222">Aug</text>
<rect x="855.75" y="316.68" width="11.03" height="72.72" fill="url(#gM)"/>
<text x="861.27" y="399.1" font-size="6.3" text-anchor="middle" fill="#222">Sep</text>
<rect x="877.82" y="334.19" width="11.03" height="55.21" fill="url(#gM)"/>
<text x="883.33" y="399.1" font-size="6.3" text-anchor="middle" fill="#222">Oct</text>
<rect x="899.88" y="347.65" width="11.03" height="41.75" fill="url(#gM)"/>
<text x="905.40" y="399.1" font-size="6.3" text-anchor="middle" fill="#222">Nov</text>
<rect x="921.95" y="331.49" width="11.03" height="57.91" fill="url(#gM)"/>
<text x="927.47" y="399.1" font-size="6.3" text-anchor="middle" fill="#222">Dec</text>
<text x="672.5" y="413" font-size="7.4" fill="#111">Profits and losses by months</text>
<path d="M670.5 416.6 H938.5" stroke="#b4b4b4" stroke-width="0.8"/>
<text x="668.1" y="419.60" font-size="6.3" text-anchor="end" fill="#222">100</text>
<path d="M670.5 426.2 H938.5" stroke="#b4b4b4" stroke-width="0.8"/>
<text x="668.1" y="429.20" font-size="6.3" text-anchor="end" fill="#222">87</text>
<path d="M673.7 416.6 V432" stroke="#a8a8a8" stroke-width="0.75"/>
</svg>
</body></html>
